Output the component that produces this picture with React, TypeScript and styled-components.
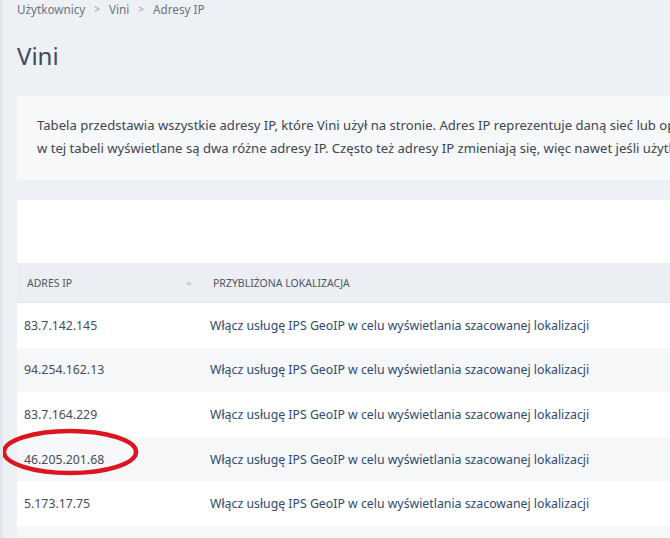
import React from "react";
import styled, { createGlobalStyle } from "styled-components";

const Global = createGlobalStyle`
  html, body { margin: 0; padding: 0; }
  body {
    background: #edf0f4;
    font-family: "Segoe UI", "Noto Sans", "Open Sans", sans-serif;
    overflow: hidden;
  }
`;

const Page = styled.div`
  width: 670px;
  height: 538px;
  overflow: hidden;
  border-left: 3px solid #e2e5ea;
  box-sizing: border-box;
  background: #edf0f4;
`;

const Inner = styled.div`
  width: 980px;
  padding-left: 14px;
`;

const Breadcrumb = styled.nav`
  display: flex;
  align-items: center;
  gap: 9px;
  height: 18px;
  font-size: 11.7px;
  color: #6b7382;
`;

const Sep = styled.span`
  font-size: 10px;
  color: #9aa1ad;
`;

const Title = styled.h1`
  margin: 20px 0 0;
  font-size: 24px;
  font-weight: 400;
  line-height: 36px;
  color: #3e4a5c;
`;

const Info = styled.div`
  margin-top: 22px;
  background: #f7f8fa;
  padding: 18px 20px;
  height: 48px;
  font-size: 13.1px;
  line-height: 23px;
  color: #40454f;
  white-space: nowrap;
`;

const Card = styled.div`
  margin-top: 20px;
  background: #ffffff;
`;

const Toolbar = styled.div`
  height: 63px;
`;

const HeadRow = styled.div`
  display: grid;
  grid-template-columns: 186px 1fr;
  height: 39px;
  align-items: center;
  background: #ebeef3;
  border-bottom: 1px solid #e2e5ea;
  font-size: 10.5px;
  color: #50565f;
  text-transform: uppercase;
`;

const HeadCell = styled.div<{ $pad: number }>`
  display: flex;
  align-items: center;
  justify-content: space-between;
  padding-left: ${(p) => p.$pad}px;
`;

const SortArrow = styled.span`
  width: 0;
  height: 0;
  border-left: 3.5px solid transparent;
  border-right: 3.5px solid transparent;
  border-bottom: 4px solid #c9ced6;
  margin-right: 11px;
`;

const Row = styled.div<{ $alt: boolean }>`
  display: grid;
  grid-template-columns: 186px 1fr;
  height: 44.6px;
  align-items: center;
  background: ${(p) => (p.$alt ? "#f6f7f9" : "#ffffff")};
  font-size: 12.3px;
`;

const IpCell = styled.div`
  position: relative;
  padding-left: 7px;
  color: #474c56;
`;

const LinkCell = styled.a`
  padding-left: 7px;
  color: #2e4a70;
  text-decoration: none;
`;

const Circle = styled.svg`
  position: absolute;
  left: -16px;
  top: -23px;
  width: 138px;
  height: 48px;
  overflow: visible;
  pointer-events: none;
`;

const ips = [
  "83.7.142.145",
  "94.254.162.13",
  "83.7.164.229",
  "46.205.201.68",
  "5.173.17.75",
  "83.7.150.12",
];

export default function App() {
  return (
    <>
      <Global />
      <Page>
        <Inner>
          <Breadcrumb>
            <span>Użytkownicy</span>
            <Sep>&gt;</Sep>
            <span>Vini</span>
            <Sep>&gt;</Sep>
            <span>Adresy IP</span>
          </Breadcrumb>
          <Title>Vini</Title>
          <Info>
            Tabela przedstawia wszystkie adresy IP, które Vini użył na stronie. Adres IP reprezentuje daną sieć lub opcję połączenia, z której korzystał użytkownik.
            <br />
            w tej tabeli wyświetlane są dwa różne adresy IP. Często też adresy IP zmieniają się, więc nawet jeśli użytkownik korzysta z tej samej sieci.
          </Info>
          <Card>
            <Toolbar />
            <HeadRow>
              <HeadCell $pad={10}>
                <span>Adres IP</span>
                <SortArrow />
              </HeadCell>
              <HeadCell $pad={10}>
                <span>Przybliżona lokalizacja</span>
              </HeadCell>
            </HeadRow>
            {ips.map((ip, i) => (
              <Row key={ip} $alt={i % 2 === 1}>
                <IpCell>
                  {ip}
                  {i === 3 && (
                    <Circle viewBox="0 0 138 48">
                      <ellipse
                        cx="69"
                        cy="24"
                        rx="66"
                        ry="21"
                        fill="none"
                        stroke="#dc1620"
                        strokeWidth="4.5"
                      />
                    </Circle>
                  )}
                </IpCell>
                <LinkCell href="#">
                  Włącz usługę IPS GeoIP w celu wyświetlania szacowanej lokalizacji
                </LinkCell>
              </Row>
            ))}
          </Card>
        </Inner>
      </Page>
    </>
  );
}
